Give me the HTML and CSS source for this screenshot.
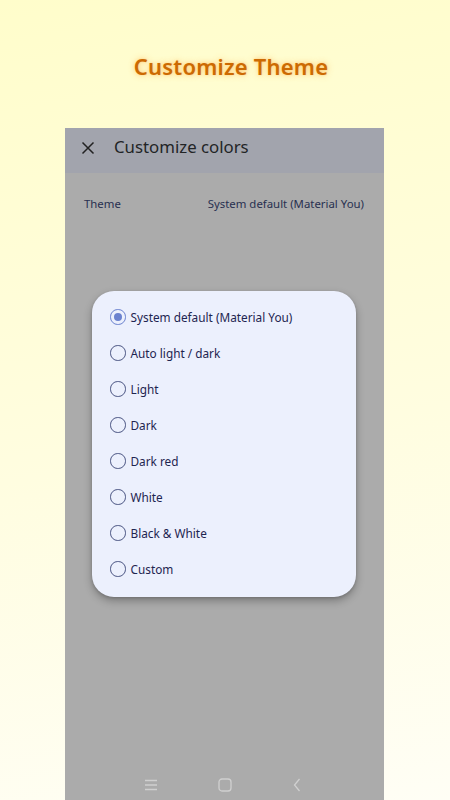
FILE: index.html
```html
<!DOCTYPE html>
<html>
<head>
<meta charset="utf-8">
<link rel="stylesheet" href="styles.css">
</head>
<body>
<header class="hero">
  <h1 class="hero-title">Customize Theme</h1>
</header>
<main class="phone">
  <div class="appbar">
    <svg class="close" viewBox="0 0 14 14" width="14" height="14"><path d="M1.5 1.5 L12.5 12.5 M12.5 1.5 L1.5 12.5" stroke="#222" stroke-width="1.5" fill="none"/></svg>
    <span class="appbar-title">Customize colors</span>
  </div>
  <div class="setting">
    <span class="setting-label">Theme</span>
    <span class="setting-value">System default (Material You)</span>
  </div>
  <div class="dialog">
    <div class="option"><span class="radio checked"></span><span>System default (Material You)</span></div>
    <div class="option"><span class="radio"></span><span>Auto light / dark</span></div>
    <div class="option"><span class="radio"></span><span>Light</span></div>
    <div class="option"><span class="radio"></span><span>Dark</span></div>
    <div class="option"><span class="radio"></span><span>Dark red</span></div>
    <div class="option"><span class="radio"></span><span>White</span></div>
    <div class="option"><span class="radio"></span><span>Black &amp; White</span></div>
    <div class="option"><span class="radio"></span><span>Custom</span></div>
  </div>
  <nav class="navbar">
    <svg viewBox="0 0 12 12" width="12" height="12"><path d="M0 1.5 H12 M0 6 H12 M0 10.5 H12" stroke="#d0d0d0" stroke-width="1.3"/></svg>
    <svg viewBox="0 0 14 14" width="14" height="14"><rect x="1" y="1" width="12" height="12" rx="3" fill="none" stroke="#d0d0d0" stroke-width="1.3"/></svg>
    <svg viewBox="0 0 8 14" width="8" height="14"><path d="M6.5 1 L1.5 7 L6.5 13" fill="none" stroke="#d0d0d0" stroke-width="1.3"/></svg>
  </nav>
</main>
</body>
</html>
```
FILE: styles.css
```css
html, body {
  margin: 0;
  padding: 0;
  height: 800px;
  overflow: hidden;
}
body {
  background: linear-gradient(170deg, #fffdcb 0%, #fffde0 55%, #fffef5 100%);
  font-family: "Noto Sans", sans-serif;
}
.hero {
  height: 128px;
  display: flex;
  justify-content: center;
  padding-left: 12px;
  box-sizing: border-box;
}
.hero-title {
  margin: 49px 0 0;
  font-family: "Noto Sans", sans-serif;
  font-size: 22px;
  font-weight: 600;
  line-height: 34px;
  color: #cc6a02;
  text-shadow: 0 0 6px rgba(255, 190, 90, 0.85), 0 0 2px rgba(255, 200, 120, 0.7);
  letter-spacing: 0.2px;
}
.phone {
  position: relative;
  margin: 0 66px 0 65px;
  height: 672px;
  background: #ababab;
  display: flex;
  flex-direction: column;
}
.appbar {
  height: 45px;
  box-sizing: border-box;
  padding: 0 0 6px 16px;
  background: #a2a4ad;
  display: flex;
  align-items: center;
  gap: 19px;
}
.close { flex: none; }
.appbar-title {
  font-family: "Noto Sans", sans-serif;
  font-size: 16.8px;
  color: #222426;
  margin-bottom: 2px;
}
.setting {
  display: flex;
  justify-content: space-between;
  padding: 0 20px 0 19px;
  margin-top: 22px;
  font-family: "Noto Sans", sans-serif;
  font-size: 11.4px;
  color: #283050;
  line-height: 18px;
}
.dialog {
  position: absolute;
  left: 27px;
  top: 163px;
  width: 264px;
  box-sizing: border-box;
  background: #ecf0fd;
  border-radius: 22px;
  padding: 8px 0 10px 18px;
  box-shadow: 0 4px 8px rgba(0, 0, 0, 0.28), 0 1px 3px rgba(0, 0, 0, 0.15);
  display: flex;
  flex-direction: column;
}
.option {
  height: 36px;
  display: flex;
  align-items: center;
  gap: 5px;
  font-family: "Noto Sans", sans-serif;
  font-size: 11.8px;
  color: #1e2550;
}
.radio {
  width: 13.5px;
  height: 13.5px;
  border: 1.7px solid #4b5583;
  border-radius: 50%;
  flex: none;
  position: relative;
}
.radio.checked {
  border-color: #6b82cf;
}
.radio.checked::after {
  content: "";
  position: absolute;
  left: 2.75px;
  top: 2.75px;
  width: 8px;
  height: 8px;
  border-radius: 50%;
  background: #6b82cf;
}
.navbar {
  margin-top: auto;
  height: 30px;
  display: flex;
  justify-content: center;
  align-items: center;
  gap: 61px;
  padding-right: 4px;
}
```
